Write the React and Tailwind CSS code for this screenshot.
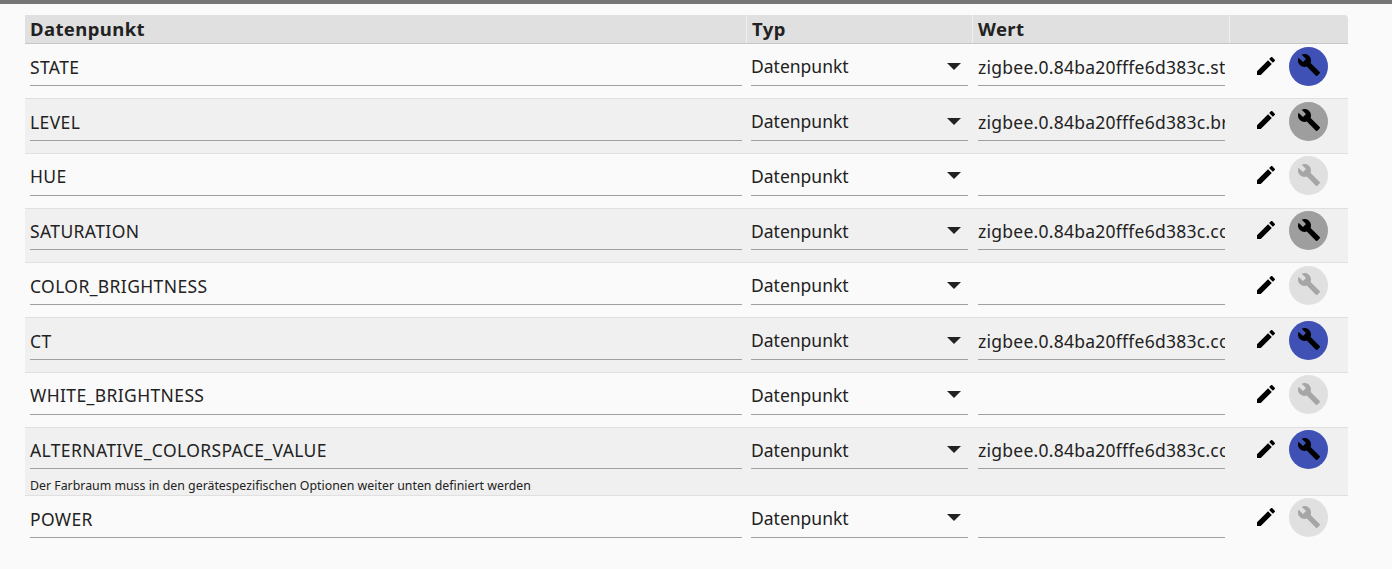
const rows = [
  { n: "STATE", v: "zigbee.0.84ba20fffe6d383c.state", b: "blue" },
  { n: "LEVEL", v: "zigbee.0.84ba20fffe6d383c.brightness", b: "gray" },
  { n: "HUE", v: "", b: "off" },
  { n: "SATURATION", v: "zigbee.0.84ba20fffe6d383c.color", b: "gray" },
  { n: "COLOR_BRIGHTNESS", v: "", b: "off" },
  { n: "CT", v: "zigbee.0.84ba20fffe6d383c.colortemp", b: "blue" },
  { n: "WHITE_BRIGHTNESS", v: "", b: "off" },
  { n: "ALTERNATIVE_COLORSPACE_VALUE", v: "zigbee.0.84ba20fffe6d383c.color", b: "blue", help: "Der Farbraum muss in den gerätespezifischen Optionen weiter unten definiert werden" },
  { n: "POWER", v: "", b: "off", last: true },
];

const Wrench = ({ className }) => (
  <svg viewBox="0 0 24 24" className={className} fill="currentColor">
    <path d="M22.7 19l-9.1-9.1c.9-2.3.4-5-1.5-6.9-2-2-5-2.4-7.4-1.3L9 6 6 9 1.6 4.7C.4 7.1.9 10.1 2.9 12.1c1.9 1.9 4.6 2.4 6.9 1.5l9.1 9.1c.4.4 1 .4 1.4 0l2.3-2.3c.5-.4.5-1.1.1-1.4z" />
  </svg>
);

const Pencil = () => (
  <svg viewBox="0 0 24 24" className="w-6 h-6 text-black" fill="currentColor">
    <path d="M3 17.25V21h3.75L17.81 9.94l-3.75-3.75L3 17.25zM20.71 7.04c.39-.39.39-1.02 0-1.41l-2.34-2.34c-.39-.39-1.02-.39-1.41 0l-1.83 1.83 3.75 3.75 1.83-1.83z" />
  </svg>
);

const btn = {
  blue: "bg-[#3f51b5] text-black",
  gray: "bg-[#9e9e9e] text-black",
  off: "bg-[#e0e0e0] text-[#a6a6a6]",
};

function Row({ r, i }) {
  const pad = r.last ? "pt-[6.7px]" : "pt-[4.7px]";
  return (
    <div className={`flex ${r.last ? "" : "border-b border-[#e0e0e0]"} ${i % 2 ? "bg-[#f0f0f0]" : ""} ${r.help ? "h-[68.2px]" : "h-[54.75px]"}`}>
      <div className="w-[721px] pl-[5px] pr-1 flex flex-col">
        <div className={`h-[41.9px] border-b border-[#a0a0a0] flex items-center ${pad}`}>
          <span className="text-[17.5px] tracking-[0.38px] text-[#222] whitespace-nowrap">{r.n}</span>
        </div>
        {r.help && <div className="text-[12.35px] leading-[15px] mt-[8.7px] text-[#222] whitespace-nowrap">{r.help}</div>}
      </div>
      <div className="w-[226px] pl-[5px] pr-1">
        <div className="h-[41.9px] border-b border-[#a0a0a0] flex items-center justify-between pr-[7px] pt-[3.3px]">
          <span className="text-[17.5px] text-[#222]">Datenpunkt</span>
          <span className="w-0 h-0 border-x-[7px] border-x-transparent border-t-[7px] border-t-[#222]"></span>
        </div>
      </div>
      <div className="w-[257px] pl-[6px] pr-1">
        <div className={`h-[41.9px] border-b border-[#a0a0a0] flex items-center overflow-hidden ${pad}`}>
          <span className="text-[17.5px] tracking-[0.25px] text-[#222] whitespace-nowrap">{r.v}</span>
        </div>
      </div>
      <div className="w-[119px] flex items-start pl-[25px] pt-[2.65px]">
        <div className="w-6 h-6 mt-[6.7px] shrink-0"><Pencil /></div>
        <div className={`ml-[11px] w-[39px] h-[39px] rounded-full flex items-center justify-center shrink-0 ${btn[r.b]}`}>
          <Wrench className="w-6 h-6 -mt-[2px]" />
        </div>
      </div>
    </div>
  );
}

export default function App() {
  return (
    <div className="w-[1392px] h-[569px] overflow-hidden bg-[#fafafa] [font-family:'Noto_Sans','Open_Sans',sans-serif]">
      <div className="h-1 bg-[#757575]"></div>
      <div className="ml-[25px] mt-[11px] w-[1323px]">
        <div className="flex h-[29.3px] border-b border-[#c8c8c8] text-[18.5px] font-bold text-[#222] leading-[28px] tracking-[0.4px]">
          <div className="w-[721px] pl-[5px] bg-[#e0e0e0]">Datenpunkt</div>
          <div className="w-[226px] pl-[5px] bg-[#e0e0e0] border-l border-[#f0f0f0]">Typ</div>
          <div className="w-[257px] pl-[5px] bg-[#e0e0e0] border-l border-[#f0f0f0]">Wert</div>
          <div className="w-[119px] bg-[#e0e0e0] border-l border-[#f0f0f0] rounded-tr-sm"></div>
        </div>
        {rows.map((r, i) => <Row key={r.n} r={r} i={i} />)}
      </div>
    </div>
  );
}
